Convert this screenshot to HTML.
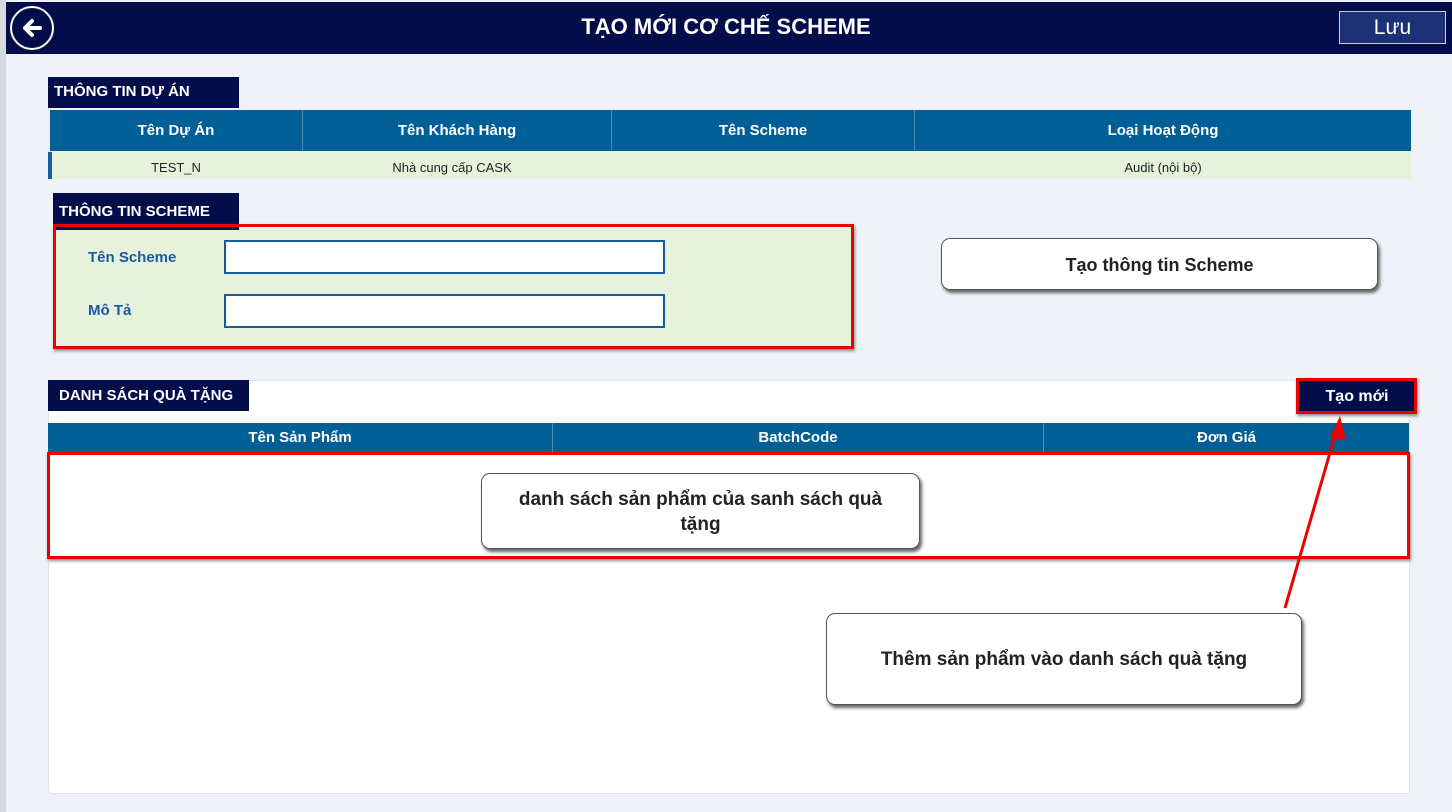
<!DOCTYPE html>
<html><head><meta charset="utf-8"><style>
*{margin:0;padding:0;box-sizing:border-box}
body{width:1452px;height:812px;background:#eff3f9;position:relative;overflow:hidden;font-family:"Liberation Sans","DejaVu Sans",sans-serif}
.a{position:absolute}
.hdr{left:6px;top:2px;width:1446px;height:52px;background:#030d4a}
.title{left:0;width:1452px;top:14px;text-align:center;color:#fff;font-weight:bold;font-size:22px}
.tag{background:#030d4a;color:#fff;font-weight:bold;font-size:15px;padding-left:6px;line-height:30px}
.th{background:#005f96;color:#fff;font-weight:bold;font-size:15px;text-align:center}
.call{background:#fff;border:1px solid #555;border-radius:9px;box-shadow:2px 3px 3px #666;color:#222;font-weight:bold;font-size:19px;text-align:center}
.red{border:3px solid #e00;box-shadow:1px 2px 3px #888}
input{position:absolute;background:#fff;border:2px solid #1a5aa0}
</style></head><body>
<div class="a" style="left:0;top:0;width:6px;height:812px;background:#d6d9de"></div>
<div class="a hdr"></div>
<div class="a" style="left:10px;top:6px;width:44px;height:44px;border:2px solid #fff;border-radius:50%"></div>
<svg class="a" style="left:18px;top:14px" width="28" height="28" viewBox="0 0 28 28"><path d="M22 14H7M14 7l-7 7 7 7" stroke="#fff" stroke-width="4" fill="none" stroke-linecap="round" stroke-linejoin="round"/></svg>
<div class="a title">TẠO MỚI CƠ CHẾ SCHEME</div>
<div class="a" style="left:1339px;top:11px;width:107px;height:33px;border:1px solid #ccd;background:#1c3274;color:#fff;font-size:21px;text-align:center;line-height:31px">Lưu</div>

<div class="a tag" style="left:48px;top:77px;width:191px;height:31px">THÔNG TIN DỰ ÁN</div>
<div class="a th" style="left:50px;top:110px;width:1361px;height:41px;border-radius:4px 4px 0 0"></div>
<div class="a th" style="left:50px;top:110px;width:252px;line-height:41px">Tên Dự Án</div>
<div class="a" style="left:302px;top:110px;width:1px;height:41px;background:#4d8bb8"></div>
<div class="a th" style="left:303px;top:110px;width:308px;line-height:41px">Tên Khách Hàng</div>
<div class="a" style="left:611px;top:110px;width:1px;height:41px;background:#4d8bb8"></div>
<div class="a th" style="left:612px;top:110px;width:302px;line-height:41px">Tên Scheme</div>
<div class="a" style="left:914px;top:110px;width:1px;height:41px;background:#4d8bb8"></div>
<div class="a th" style="left:915px;top:110px;width:496px;line-height:41px">Loại Hoạt Động</div>
<div class="a" style="left:48px;top:152px;width:1363px;height:27px;background:#e6f2dc"></div>
<div class="a" style="left:48px;top:152px;width:4px;height:27px;background:#1a5aa0"></div>
<div class="a" style="left:50px;top:160px;width:252px;text-align:center;font-size:13px;color:#222">TEST_N</div>
<div class="a" style="left:303px;top:160px;width:298px;text-align:center;font-size:13px;color:#222">Nhà cung cấp CASK</div>
<div class="a" style="left:915px;top:160px;width:496px;text-align:center;font-size:13px;color:#222">Audit (nội bộ)</div>

<div class="a" style="left:53px;top:225px;width:801px;height:124px;background:#e6f2dc"></div>
<div class="a tag" style="left:53px;top:193px;width:186px;height:37px;line-height:38px;font-size:15px">THÔNG TIN SCHEME</div>
<div class="a red" style="left:53px;top:224px;width:801px;height:125px"></div>
<div class="a" style="left:88px;top:249px;color:#1a5aa0;font-weight:bold;font-size:15px">Tên Scheme</div>
<div class="a" style="left:88px;top:302px;color:#1a5aa0;font-weight:bold;font-size:15px">Mô Tả</div>
<input style="left:224px;top:240px;width:441px;height:34px">
<input style="left:224px;top:294px;width:441px;height:34px">
<div class="a call" style="left:941px;top:238px;width:437px;height:52px;line-height:52px;font-size:18px">Tạo thông tin Scheme</div>

<div class="a" style="left:48px;top:380px;width:1362px;height:414px;background:#fff;border:1px solid #dfe3ea;border-radius:4px"></div>
<div class="a tag" style="left:48px;top:380px;width:201px;height:31px;line-height:31px;padding-left:11px">DANH SÁCH QUÀ TẶNG</div>
<div class="a th" style="left:48px;top:423px;width:1361px;height:30px;border-radius:4px 4px 0 0"></div>
<div class="a th" style="left:48px;top:423px;width:504px;line-height:30px">Tên Sản Phẩm</div>
<div class="a" style="left:552px;top:423px;width:1px;height:30px;background:#4d8bb8"></div>
<div class="a th" style="left:553px;top:423px;width:490px;line-height:30px">BatchCode</div>
<div class="a" style="left:1043px;top:423px;width:1px;height:30px;background:#4d8bb8"></div>
<div class="a th" style="left:1044px;top:423px;width:365px;line-height:30px">Đơn Giá</div>
<div class="a red" style="left:47px;top:452px;width:1363px;height:107px"></div>
<div class="a" style="left:1298px;top:378px;width:118px;height:36px;background:#030d4a;color:#fff;font-size:16px;font-weight:bold;text-align:center;line-height:37px">Tạo mới</div>
<div class="a red" style="left:1296px;top:378px;width:121px;height:36px"></div>

<div class="a call" style="left:481px;top:473px;width:439px;height:76px;padding:13px 20px 0;line-height:25px;font-size:19px">danh sách sản phẩm của sanh sách quà tặng</div>
<div class="a call" style="left:826px;top:613px;width:476px;height:92px;line-height:92px;font-size:19px">Thêm sản phẩm vào danh sách quà tặng</div>
<svg class="a" style="left:0;top:0" width="1452" height="812"><line x1="1285" y1="608" x2="1336" y2="432" stroke="#e00" stroke-width="3"/><polygon points="1340,416 1330,438 1346,440" fill="#e00"/></svg>
</body></html>
